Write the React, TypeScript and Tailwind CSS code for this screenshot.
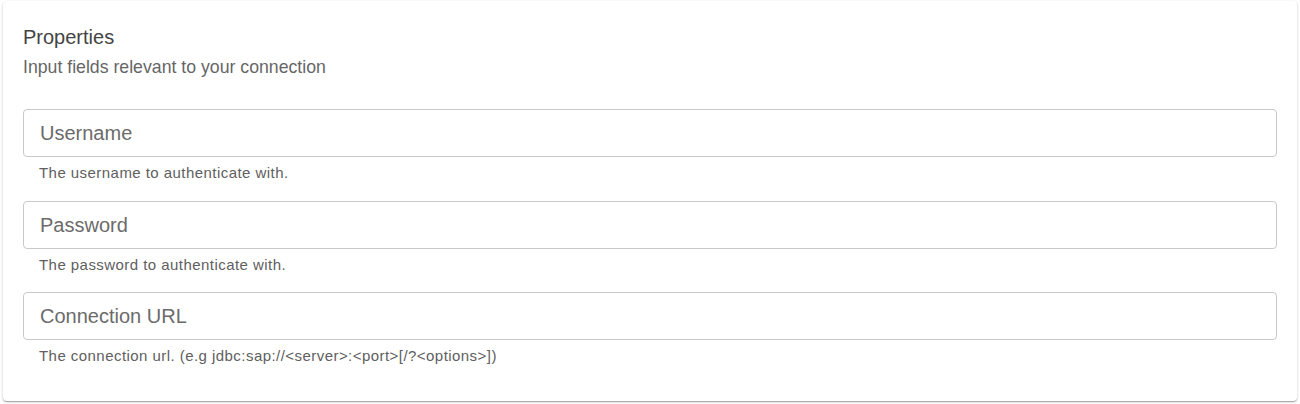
import React from "react";

const fields = [
  { label: "Username", help: "The username to authenticate with." },
  { label: "Password", help: "The password to authenticate with." },
  { label: "Connection URL", help: "The connection url. (e.g jdbc:sap://<server>:<port>[/?<options>])" },
];

export default function App() {
  return (
    <div className="w-[1300px] h-[404px] bg-white px-[3px] pt-[1px]" style={{ fontFamily: '"Liberation Sans", Arial, sans-serif' }}>
      <div className="h-[400px] rounded-[4px] bg-white shadow-[0_1px_3px_0_rgba(0,0,0,0.2),0_1px_1px_0_rgba(0,0,0,0.14),0_2px_1px_-1px_rgba(0,0,0,0.12)] px-[20px] pt-[24px]">
        <h2 className="text-[20px] leading-[24px] text-[#444]">Properties</h2>
        <p className="mt-[8px] text-[17.7px] leading-[20px] text-[#666]">Input fields relevant to your connection</p>
        <div className="mt-[32px] flex flex-col">
          {fields.map((f) => (
            <div key={f.label} className="h-[91.5px]">
              <div className="h-[48px] rounded-[4px] border border-[#c9c9c9] flex items-center px-[16px]">
                <span className="text-[20px] text-[#6b6b6b]">{f.label}</span>
              </div>
              <div className="mt-[6px] pl-[16px] text-[15px] leading-[20px] tracking-[0.03em] text-[#606060]">{f.help}</div>
            </div>
          ))}
        </div>
      </div>
    </div>
  );
}
